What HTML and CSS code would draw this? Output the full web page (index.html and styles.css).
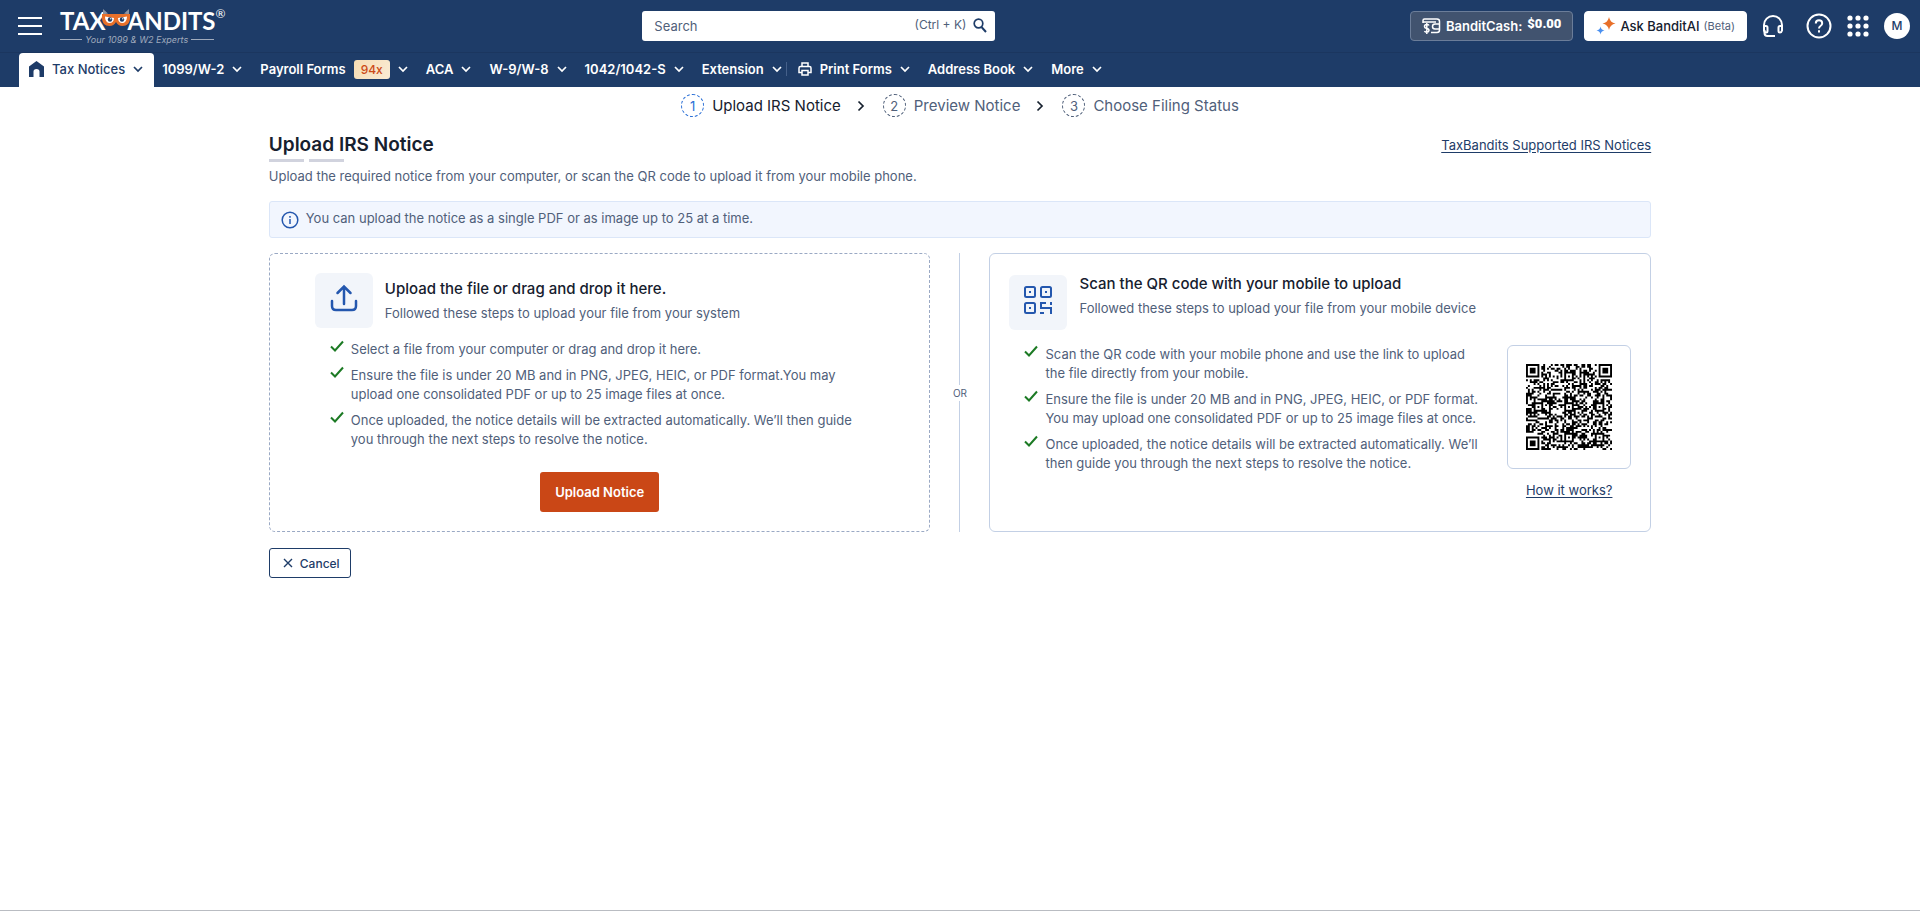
FILE: index.html
```html
<!DOCTYPE html>
<html lang="en">
<head>
  <meta charset="UTF-8">
  <meta name="viewport" content="width=device-width, initial-scale=1.0">
  <title>Upload IRS Notice</title>
  <link rel="stylesheet" href="styles.css">
</head>
<body>
  <svg class="sprite" aria-hidden="true">
    <symbol id="chevron" viewBox="0 0 10 10"><path d="M1 3l4 4 4-4" fill="none" stroke="currentColor" stroke-width="1.7"/></symbol>
    <symbol id="check" viewBox="0 0 14 12"><path d="M1 6.500l4 4L13 1.500" fill="none" stroke="currentColor" stroke-width="2"/></symbol>
  </svg>

  <header class="header">
    <div class="topbar">
      <div class="topbar-left">
        <button class="menu-btn" aria-label="Menu"><span></span><span></span><span></span></button>
        <a href="#" class="logo">
          <span class="logo-name">TAX<svg class="owl" width="28" height="18" viewBox="0 0 28 18">
              <path d="M1 0l5 4.500-5 1zM27 0l-5 4.500 5 1z" fill="#8a93a3"/>
              <path d="M0 5h28v4c0 5-3 8-7.500 8-3 0-5-1.500-6.500-4-1.500 2.500-3.500 4-6.500 4C3 17 0 14 0 9z" fill="#e8702a"/>
              <path d="M3 7.500l9 1.500c0 7-9 7-9-1.500zM25 7.500L16 9c0 7 9 7 9-1.500z" fill="#fff"/>
              <circle cx="8" cy="10.500" r="2.200" fill="#1e3c68"/><circle cx="20" cy="10.500" r="2.200" fill="#1e3c68"/>
              <circle cx="8.800" cy="9.800" r=".7" fill="#fff"/><circle cx="20.800" cy="9.800" r=".7" fill="#fff"/>
            </svg>ANDITS<sup>®</sup></span>
          <span class="logo-tag">Your 1099 &amp; W2 Experts</span>
        </a>
      </div>
      <div class="search">
        <input type="text" placeholder="Search" aria-label="Search">
        <span class="search-key">(Ctrl + K)</span>
        <svg width="14" height="15" viewBox="0 0 14 15"><circle cx="5.500" cy="5.500" r="4.300" fill="none" stroke="currentColor" stroke-width="1.700"/><path d="M8.500 9l4.500 5" stroke="currentColor" stroke-width="2"/></svg>
      </div>
      <div class="topbar-right">
        <button class="cash-btn">
          <svg width="19" height="16" viewBox="0 0 19 16" fill="none" stroke="currentColor" stroke-width="1.500"><path d="M1 5V2.500Q1 1 2.500 1H15Q17.500 1 17.500 3.500V12Q17.500 14.500 15 14.500H9M1.500 4H14"/><path d="M17.500 6H13a2 2 0 0 0 0 5h4.500"/><path d="M7 7.500Q6.500 6.500 4.800 6.500 2.500 6.500 2.500 8.300T4.800 10.500 7 12.500 4.800 14.300Q3 14.300 2.500 13M4.800 5v11"/></svg>
          <span>BanditCash:</span><b>$0.00</b>
        </button>
        <button class="ai-btn">
          <svg width="20" height="20" viewBox="0 0 20 20"><path d="M13 1q1 5.500 6.500 6.500-5.500 1-6.500 6.500-1-5.500-6.500-6.500 5.500-1 6.500-6.500z" fill="#e8702a"/><path d="M4.500 10.500q.5 3.500 4 4-3.500.5-4 4-.5-3.500-4-4 3.500-.5 4-4z" fill="#4a90f0"/></svg>
          <span>Ask BanditAI</span><small>(Beta)</small>
        </button>
        <button class="icon-btn" aria-label="Support">
          <svg width="22" height="24" viewBox="0 0 22 24" fill="none" stroke="currentColor" stroke-width="2"><path d="M2 14v-3a9 9 0 0 1 18 0v3"/><path d="M2 12h2q1.500 0 1.500 1.500V17Q5.500 18.500 4 18.500T2 16.500zM20 12h-2q-1.500 0-1.500 1.500V17q0 1.500 1.500 1.500t2-2z"/><path d="M2.500 16v3q0 3 3 3H13"/></svg>
        </button>
        <button class="icon-btn help-btn" aria-label="Help">
          <svg width="26" height="26" viewBox="0 0 26 26" fill="none" stroke="currentColor" stroke-width="2"><circle cx="13" cy="13" r="11.500"/><path d="M9.800 10.500q0-3.200 3.200-3.200t3.200 3q0 1.700-1.700 2.700-1.500 1-1.500 2.500M13 17.300v2.200"/></svg>
        </button>
        <button class="icon-btn" aria-label="Apps">
          <svg width="22" height="22" viewBox="0 0 22 22" fill="currentColor"><circle cx="3" cy="3" r="2.600"/><circle cx="11" cy="3" r="2.600"/><circle cx="19" cy="3" r="2.600"/><circle cx="3" cy="11" r="2.600"/><circle cx="11" cy="11" r="2.600"/><circle cx="19" cy="11" r="2.600"/><circle cx="3" cy="19" r="2.600"/><circle cx="11" cy="19" r="2.600"/><circle cx="19" cy="19" r="2.600"/></svg>
        </button>
        <button class="avatar">M</button>
      </div>
    </div>

    <nav class="nav">
      <a href="#" class="nav-item active"><svg width="15" height="16" viewBox="0 0 15 16"><path d="M7.500 0L0 5.500V16h4.500v-5.500Q4.500 8 7.500 8t3 2.500V16H15V5.500z" fill="currentColor"/></svg>Tax Notices<svg class="chev"><use href="#chevron"/></svg></a>
      <a href="#" class="nav-item">1099/W-2<svg class="chev"><use href="#chevron"/></svg></a>
      <a href="#" class="nav-item">Payroll Forms<span class="badge">94x</span><svg class="chev"><use href="#chevron"/></svg></a>
      <a href="#" class="nav-item">ACA<svg class="chev"><use href="#chevron"/></svg></a>
      <a href="#" class="nav-item">W-9/W-8<svg class="chev"><use href="#chevron"/></svg></a>
      <a href="#" class="nav-item">1042/1042-S<svg class="chev"><use href="#chevron"/></svg></a>
      <a href="#" class="nav-item last">Extension<svg class="chev"><use href="#chevron"/></svg></a>
      <a href="#" class="nav-item print"><svg width="14" height="14" viewBox="0 0 14 14" fill="none" stroke="currentColor" stroke-width="1.500"><path d="M4 4.500V1h6v3.500M4 10.500H1V6q0-1.500 1.500-1.500h9Q13 4.500 13 6v4.500h-3"/><path d="M4 8.500h6V13H4z"/></svg>Print Forms<svg class="chev"><use href="#chevron"/></svg></a>
      <a href="#" class="nav-item">Address Book<svg class="chev"><use href="#chevron"/></svg></a>
      <a href="#" class="nav-item">More<svg class="chev"><use href="#chevron"/></svg></a>
    </nav>
  </header>

  <ol class="steps">
    <li class="step current"><span class="step-num">1</span>Upload IRS Notice</li>
    <li class="step"><svg class="step-arrow" width="8" height="12" viewBox="0 0 8 12"><path d="M1.500 1.500L6 6l-4.500 4.500" fill="none" stroke="#16202e" stroke-width="1.700"/></svg><span class="step-num">2</span>Preview Notice</li>
    <li class="step"><svg class="step-arrow" width="8" height="12" viewBox="0 0 8 12"><path d="M1.500 1.500L6 6l-4.500 4.500" fill="none" stroke="#16202e" stroke-width="1.700"/></svg><span class="step-num">3</span>Choose Filing Status</li>
  </ol>

  <main class="content">
    <div class="title-row">
      <h1>Upload IRS Notice</h1>
      <a href="#" class="link">TaxBandits Supported IRS Notices</a>
    </div>
    <p class="intro">Upload the required notice from your computer, or scan the QR code to upload it from your mobile phone.</p>

    <div class="info">
      <svg width="18" height="18" viewBox="0 0 18 18" fill="none" stroke="currentColor" stroke-width="1.500"><circle cx="9" cy="9" r="7.800"/><path d="M9 8v5M9 5v1.700"/></svg>
      <span>You can upload the notice as a single PDF or as image up to 25 at a time.</span>
    </div>

    <div class="panels">
      <section class="panel upload">
        <div class="panel-head">
          <span class="panel-icon"><svg width="28" height="28" viewBox="0 0 28 28" fill="none" stroke="currentColor" stroke-width="2.500" stroke-linecap="round"><path d="M14 20V2.500M7.500 9L14 2.500 20.500 9"/><path d="M2 17v5q0 4 4 4h16q4 0 4-4v-5"/></svg></span>
          <div>
            <h2>Upload the file or drag and drop it here.</h2>
            <p>Followed these steps to upload your file from your system</p>
          </div>
        </div>
        <ul class="checks">
          <li><svg class="check"><use href="#check"/></svg><span>Select a file from your computer or drag and drop it here.</span></li>
          <li><svg class="check"><use href="#check"/></svg><span>Ensure the file is under 20 MB and in PNG, JPEG, HEIC, or PDF format.You may upload one consolidated PDF or up to 25 image files at once.</span></li>
          <li><svg class="check"><use href="#check"/></svg><span>Once uploaded, the notice details will be extracted automatically. We’ll then guide you through the next steps to resolve the notice.</span></li>
        </ul>
        <button class="upload-btn">Upload Notice</button>
      </section>

      <div class="divider"><span>OR</span></div>

      <section class="panel scan">
        <div class="panel-head">
          <span class="panel-icon"><svg width="30" height="30" viewBox="0 0 30 30" fill="none" stroke="currentColor" stroke-width="2"><rect x="2" y="2" width="10" height="10" rx="1.500"/><rect x="18" y="2" width="10" height="10" rx="1.500"/><rect x="2" y="18" width="10" height="10" rx="1.500"/><path d="M6 7h2M22 7h2M6 23h2M17 18h6M18 17v6h6M28 17v3M23 23h5v6M17 28h4"/></svg></span>
          <div>
            <h2>Scan the QR code with your mobile to upload</h2>
            <p>Followed these steps to upload your file from your mobile device</p>
          </div>
        </div>
        <div class="scan-body">
          <ul class="checks">
            <li><svg class="check"><use href="#check"/></svg><span>Scan the QR code with your mobile phone and use the link to upload the file directly from your mobile.</span></li>
            <li><svg class="check"><use href="#check"/></svg><span>Ensure the file is under 20 MB and in PNG, JPEG, HEIC, or PDF format. You may upload one consolidated PDF or up to 25 image files at once.</span></li>
            <li><svg class="check"><use href="#check"/></svg><span>Once uploaded, the notice details will be extracted automatically. We’ll then guide you through the next steps to resolve the notice.</span></li>
          </ul>
          <div class="qr-side">
            <div class="qr-box"><svg id="qr" width="86" height="86" viewBox="0 0 45 45" role="img" aria-label="QR code"></svg></div>
            <a href="#" class="link">How it works?</a>
          </div>
        </div>
      </section>
    </div>

    <button class="cancel-btn"><svg width="10" height="10" viewBox="0 0 10 10"><path d="M1 1l8 8M9 1L1 9" stroke="currentColor" stroke-width="1.400"/></svg>Cancel</button>
  </main>

  <footer class="footer"></footer>
  <script src="qr.js"></script>
</body>
</html>
```
FILE: styles.css
```css
* {
  box-sizing: border-box;
}

body {
  margin: 0;
  min-height: 100vh;
  display: flex;
  flex-direction: column;
  font-family: Inter, "Liberation Sans", sans-serif;
  font-size: 13px;
  color: #50607a;
  background: #fff;
}

h1, h2, p, ul, ol {
  margin: 0;
  padding: 0;
}

ul, ol {
  list-style: none;
}

button, input {
  font-family: inherit;
}

button {
  cursor: pointer;
}

.sprite {
  display: none;
}

/* header */
.header {
  background: #1e3c68;
  color: #fff;
}

.topbar {
  display: grid;
  grid-template-columns: 33% 353px 1fr;
  align-items: center;
  height: 53px;
  padding: 0 10px 1px 18px;
  border-bottom: 1px solid #1b365f;
}

.topbar-left {
  display: flex;
  align-items: center;
  gap: 18px;
}

.menu-btn {
  display: flex;
  flex-direction: column;
  gap: 6px;
  width: 24px;
  padding: 0;
  background: none;
  border: none;
}

.menu-btn span {
  height: 2px;
  background: #fff;
}

.logo {
  display: flex;
  flex-direction: column;
  color: #fff;
  text-decoration: none;
}

.logo-name {
  display: flex;
  align-items: center;
  height: 28px;
  font-family: Lato, sans-serif;
  font-size: 24px;
  font-weight: 700;
}

.owl {
  margin: 0 -3px 6px;
}

.logo-name sup {
  align-self: flex-start;
  font-size: 12px;
  font-weight: 400;
  line-height: 14px;
}

.logo-tag {
  display: flex;
  align-items: center;
  gap: 3px;
  margin-right: 12px;
  font-size: 9px;
  font-style: italic;
  line-height: 10px;
  color: #a0abbd;
}

.logo-tag::before,
.logo-tag::after {
  content: "";
  flex: 1;
  height: 1px;
  background: #a0abbd;
}

.search {
  display: flex;
  align-items: center;
  gap: 7px;
  height: 30px;
  padding: 0 8px 0 12px;
  background: #fff;
  border-radius: 3px;
  color: #1e3c68;
}

.search input {
  flex: 1;
  min-width: 0;
  padding: 0;
  border: none;
  outline: none;
  font-size: 13px;
}

.search input::placeholder {
  color: #50607a;
}

.search-key {
  padding-bottom: 2px;
  font-size: 12px;
  color: #50607a;
}

.topbar-right {
  display: flex;
  justify-content: flex-end;
  align-items: center;
}

.cash-btn,
.ai-btn {
  display: flex;
  align-items: center;
  height: 30px;
  padding: 0 11px;
  border: 1px solid #6b7d99;
  border-radius: 4px;
  background: #41536f;
  color: #fff;
  font-size: 13px;
  font-weight: 600;
}

.cash-btn {
  gap: 5px;
  margin-right: 11px;
}

.cash-btn b {
  font-family: Roboto, sans-serif;
  padding-bottom: 4px;
}

.ai-btn {
  gap: 4px;
  margin-right: 15px;
  border-color: #fff;
  background: #fff;
  color: #16202e;
  font-weight: 500;
}

.ai-btn small {
  font-size: 11px;
  font-weight: 400;
  color: #50607a;
}

.icon-btn {
  display: flex;
  padding: 0;
  margin-right: 15px;
  background: none;
  border: none;
  color: #fff;
}

.help-btn {
  margin-left: 7px;
}

.avatar {
  width: 26px;
  height: 26px;
  padding: 0;
  border: none;
  border-radius: 50%;
  background: #fff;
  color: #1e3c68;
  font-size: 12px;
  font-weight: 500;
}

.nav {
  display: flex;
  height: 34px;
  padding-left: 19px;
}

.nav-item {
  display: flex;
  align-items: center;
  gap: 8px;
  padding: 0 10px 2px 8px;
  color: #fff;
  font-size: 13px;
  font-weight: 600;
  text-decoration: none;
}

.nav-item.active {
  padding: 0 11px 2px 10px;
  background: #fff;
  color: #1e3c68;
  font-weight: 500;
  border-radius: 4px 4px 0 0;
}

.nav-item.last {
  padding-right: 4px;
}

.nav-item.print::before {
  content: "";
  width: 1px;
  height: 14px;
  margin-right: 3px;
  background: #45608a;
}

.nav-item.print {
  padding-left: 0;
}

.chev {
  width: 10px;
  height: 10px;
}

.badge {
  padding: 2px 7px;
  border-radius: 3px;
  background: linear-gradient(120deg, #f5dcb4, #faebd4);
  color: #cc4a17;
  font-size: 12px;
  font-weight: 500;
}

/* progress steps */
.steps {
  display: flex;
  justify-content: center;
  padding-top: 7px;
}

.step {
  display: flex;
  align-items: center;
  gap: 8px;
  font-size: 15px;
}

.step.current {
  color: #16202e;
}

.step-num {
  display: flex;
  align-items: center;
  justify-content: center;
  width: 23px;
  height: 23px;
  border: 1px dashed #50607a;
  border-radius: 50%;
  font-size: 13px;
}

.step.current .step-num {
  border-color: #2a6fd6;
  color: #2a6fd6;
}

.step-arrow {
  margin: 0 10px 0 16px;
}

/* content */
.content {
  flex: 1;
  width: 72%;
  margin: 0 auto;
}

.title-row {
  display: flex;
  justify-content: space-between;
  align-items: flex-start;
  padding-top: 16px;
}

h1 {
  font-size: 19px;
  line-height: 24px;
  font-weight: 600;
  color: #16202e;
}

h1::after {
  content: "";
  display: block;
  width: 75px;
  height: 3px;
  margin-top: 2px;
  background: linear-gradient(90deg, #d1d3de 35px, #fff 35px, #fff 40px, #d1d3de 40px);
}

.link {
  font-size: 13px;
  line-height: 24px;
  color: #1e3c68;
  text-underline-offset: 2px;
}

.intro {
  margin-top: 4px;
  line-height: 20px;
}

.info {
  display: flex;
  align-items: center;
  gap: 7px;
  height: 37px;
  margin: 15px 0;
  padding: 0 11px;
  border: 1px solid #dbe6f8;
  border-radius: 3px;
  background: #f2f6fe;
}

.info span {
  padding-bottom: 3px;
}

.info svg {
  color: #2457ae;
}

.panels {
  display: grid;
  grid-template-columns: minmax(0, 1fr) 59px minmax(0, 1fr);
}

.panel {
  min-height: 279px;
  border: 1px solid #c3d0e5;
  border-radius: 6px;
}

.upload {
  display: flex;
  flex-direction: column;
  padding: 19px 45px;
  border: 1px dashed #9aa9c4;
}

.scan {
  padding: 21px 19px;
}

.panel-head {
  display: flex;
  gap: 12px;
}

.panel-icon {
  display: flex;
  align-items: center;
  justify-content: center;
  width: 58px;
  height: 55px;
  padding-bottom: 6px;
  border-radius: 6px;
  background: #f2f5fa;
  color: #2457ae;
}

.panel-head h2 {
  padding-top: 4px;
  font-size: 15px;
  line-height: 24px;
  font-weight: 500;
  color: #16202e;
}

.panel-head p {
  padding-top: 3px;
  line-height: 19px;
}

.scan .panel-head h2 {
  padding-top: 0;
  margin-top: -3px;
}

.checks {
  padding: 12px 15px 0;
}

.checks li {
  display: flex;
  gap: 7px;
  margin-bottom: 7px;
  line-height: 19px;
}

.check {
  flex: none;
  width: 14px;
  height: 12px;
  color: #1c7a24;
}

.upload-btn {
  align-self: center;
  height: 40px;
  margin-top: auto;
  padding: 0 15px;
  border: none;
  border-radius: 3px;
  background: #ca4716;
  color: #fff;
  font-size: 13px;
  font-weight: 600;
}

.divider {
  display: flex;
  flex-direction: column;
  align-items: center;
  gap: 2px;
  font-size: 10px;
}

.divider::before,
.divider::after {
  content: "";
  flex: 1;
  width: 1px;
  background: #c3d0e5;
}

.scan-body {
  display: flex;
  justify-content: space-between;
  gap: 20px;
}

.scan-body .checks {
  padding: 15px 0 0 15px;
}

.qr-side {
  display: flex;
  flex-direction: column;
  align-items: center;
  gap: 9px;
  padding-top: 15px;
}

.qr-box {
  display: flex;
  padding: 18px;
  border: 1px solid #c3d0e5;
  border-radius: 6px;
}

.cancel-btn {
  display: flex;
  align-items: center;
  gap: 7px;
  height: 30px;
  margin-top: 16px;
  padding: 0 10px 0 13px;
  border: 1px solid #1e3c68;
  border-radius: 3px;
  background: #fff;
  color: #1e3c68;
  font-size: 12px;
  font-weight: 500;
}

.footer {
  border-top: 1px solid #b9bcc2;
}
```
FILE: qr.js
```js
const size = 45;
const centers = [6, 22, 38];
let seed = 1099;

function nextBit() {
  seed = (seed * 1103515245 + 12345) % 2147483648;
  return seed / 2147483648 < 0.5;
}

// distance rings around a point, used for finder and alignment squares
function ring(x, y, cx, cy) {
  return Math.max(Math.abs(x - cx), Math.abs(y - cy));
}

function isDark(x, y) {
  const random = nextBit();
  for (const [cx, cy] of [[3, 3], [size - 4, 3], [3, size - 4]]) {
    const r = ring(x, y, cx, cy);
    if (r <= 4) return r <= 1 || r === 3;
  }
  for (const cx of centers) {
    for (const cy of centers) {
      if ((cx === 6 && cy !== 22) || (cy === 6 && cx !== 22)) continue;
      const r = ring(x, y, cx, cy);
      if (r <= 2) return r !== 1;
    }
  }
  if (x === 6 || y === 6) return (x + y) % 2 === 0;
  return random;
}

let d = '';
for (let y = 0; y < size; y++) {
  for (let x = 0; x < size; x++) {
    if (isDark(x, y)) d += `M${x} ${y}h1v1h-1z`;
  }
}
const path = document.createElementNS('http://www.w3.org/2000/svg', 'path');
path.setAttribute('d', d);
document.getElementById('qr').appendChild(path);
```
